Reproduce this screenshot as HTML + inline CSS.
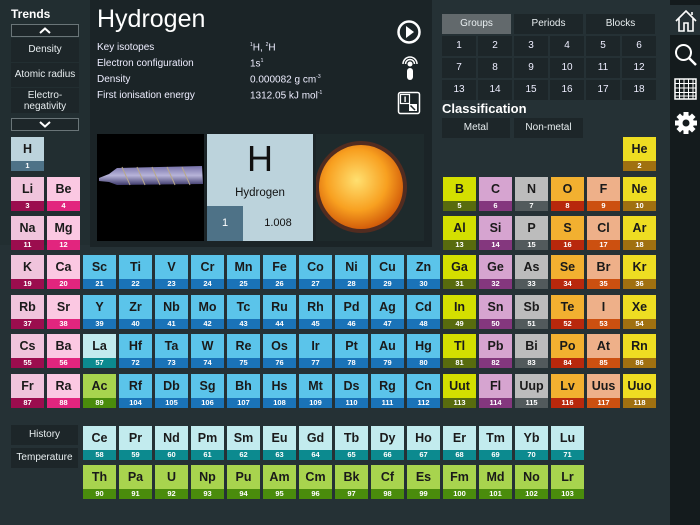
<!DOCTYPE html>
<html><head><meta charset="utf-8"><style>
*{margin:0;padding:0;box-sizing:border-box}
body{width:700px;height:525px;background:#253135;position:relative;overflow:hidden;font-family:"Liberation Sans",sans-serif;color:#fff}
.a{position:absolute}
.c{position:absolute;width:33px;height:34px}
.c b{display:block;height:24px;line-height:25px;text-align:center;font-size:12.5px;color:#1a1a1a;font-weight:bold}
.c i{display:block;height:10px;line-height:10px;text-align:center;font-size:7.5px;font-style:normal;font-weight:bold;color:#fff}
.h b{background:#bcd3dc}.h i{background:#4e7287}
.g1 b{background:#f0c4dc}.g1 i{background:#9b0d4e}
.g2 b{background:#fbc8e2}.g2 i{background:#e2257e}
.t b{background:#5bc4ea}.t i{background:#1a73b8}
.l b{background:#c2ebee}.l i{background:#0c8a8f}
.k b{background:#a8d44e}.k i{background:#4a8c0c}
.g13 b{background:#d4df00}.g13 i{background:#586b0e}
.g14 b{background:#d6a4d0}.g14 i{background:#84377e}
.g15 b{background:#bcbcbc}.g15 i{background:#525a5c}
.g16 b{background:#f2b030}.g16 i{background:#b8280c}
.g17 b{background:#eeb089}.g17 i{background:#cc5010}
.g18 b{background:#eedd22}.g18 i{background:#a07010}
.x1{left:11px}.x2{left:47px}.x3{left:83px}.x4{left:119px}.x5{left:155px}.x6{left:191px}.x7{left:227px}.x8{left:263px}.x9{left:299px}.x10{left:335px}.x11{left:371px}.x12{left:407px}.x13{left:443px}.x14{left:479px}.x15{left:515px}.x16{left:551px}.x17{left:587px}.x18{left:623px}
.y1{top:137px}.y2{top:177px}.y3{top:216px}.y4{top:255px}.y5{top:295px}.y6{top:334px}.y7{top:374px}.y8{top:426px}.y9{top:465px}
.btn{position:absolute;background:#1d2629;color:#e8eef0;font-size:10px;text-align:center}
.lab{position:absolute;font-size:10px;color:#eef}
.num{position:absolute;width:34px;height:20px;background:#1d2629;font-size:10px;line-height:20px;text-align:center;color:#eef}
</style></head><body>
<!-- left panel -->
<div class="a" style="left:0;top:0;width:90px;height:245px;background:#222e31"></div>
<div class="a" style="left:11px;top:7px;font-size:12px;font-weight:bold">Trends</div>
<div class="a" style="left:11px;top:24px;width:68px;height:13px;border:1px solid #6a7578;background:#1d2629"><svg width="66" height="11" style="display:block"><path d="M28 8 L33 3.5 L38 8" stroke="#fff" stroke-width="2" fill="none"/></svg></div>
<div class="btn" style="left:11px;top:38px;width:68px;height:24px;line-height:24px">Density</div>
<div class="btn" style="left:11px;top:63px;width:68px;height:24px;line-height:24px">Atomic radius</div>
<div class="btn" style="left:11px;top:88px;width:68px;height:25px;line-height:11px;padding-top:2px">Electro-<br>negativity</div>
<div class="a" style="left:11px;top:118px;width:68px;height:13px;border:1px solid #6a7578;background:#1d2629"><svg width="66" height="11" style="display:block"><path d="M28 3 L33 7.5 L38 3" stroke="#fff" stroke-width="2" fill="none"/></svg></div>
<!-- info panel -->
<div class="a" style="left:90px;top:0;width:342px;height:247px;background:#1b2427"></div>
<div class="a" style="left:97px;top:5px;font-size:25px">Hydrogen</div>
<div class="lab" style="left:97px;top:42px">Key isotopes</div>
<div class="lab" style="left:97px;top:58px">Electron configuration</div>
<div class="lab" style="left:97px;top:74px">Density</div>
<div class="lab" style="left:97px;top:90px">First ionisation energy</div>
<div class="lab" style="left:250px;top:42px"><sup style="font-size:5px">1</sup>H, <sup style="font-size:5px">2</sup>H</div>
<div class="lab" style="left:250px;top:58px">1s<sup style="font-size:5px">1</sup></div>
<div class="lab" style="left:250px;top:74px">0.000082 g cm<sup style="font-size:5px">-3</sup></div>
<div class="lab" style="left:250px;top:90px">1312.05 kJ mol<sup style="font-size:5px">-1</sup></div>
<svg class="a" style="left:396px;top:19px" width="26" height="26"><circle cx="13" cy="13" r="10.5" stroke="#fff" stroke-width="2.5" fill="none"/><path d="M10 7 L18 13 L10 19 Z" fill="#fff"/></svg>
<svg class="a" style="left:399px;top:55px" width="22" height="26"><path d="M4 9 A7 7 0 0 1 18 9" stroke="#fff" stroke-width="1.5" fill="none"/><path d="M6.5 9 A4.5 4.5 0 0 1 15.5 9" stroke="#fff" stroke-width="1.5" fill="none"/><circle cx="11" cy="9" r="2.5" fill="#fff"/><rect x="8" y="13" width="6" height="12" rx="3" fill="#fff"/></svg>
<svg class="a" style="left:397px;top:91px" width="25" height="25"><rect x="1.5" y="1.5" width="21" height="21" rx="2" stroke="#fff" stroke-width="1.5" fill="none"/><rect x="3.5" y="3.5" width="9" height="9" stroke="#fff" stroke-width="1.2" fill="none"/><rect x="7.4" y="5.5" width="1.4" height="5.5" fill="#fff"/><path d="M12 13 L20 13 L20 20 L12 20 Z" fill="#fff"/><path d="M13.5 14.5 L18 19" stroke="#1b2427" stroke-width="1.5"/></svg>
<div class="a" style="left:97px;top:134px;width:107px;height:107px;background:#000">
<svg width="107" height="107"><defs><linearGradient id="tb" x1="0" y1="0" x2="0" y2="1"><stop offset="0" stop-color="#8c86c8"/><stop offset=".5" stop-color="#d8d4ff"/><stop offset="1" stop-color="#4a4680"/></linearGradient></defs><path d="M2 44 L12 40 L20 34 L105 32 L106 50 L20 51 L12 48 L2 47Z" fill="url(#tb)" opacity=".85"/><path d="M25 33 L33 51 M40 33 L48 51 M55 33 L63 51 M70 33 L78 51 M85 33 L93 51" stroke="#b9a98a" stroke-width="1"/></svg></div>
<div class="a" style="left:207px;top:134px;width:106px;height:107px;background:#bcd3dc;color:#111">
<div class="a" style="left:0;top:4px;width:106px;text-align:center;font-size:36px">H</div>
<div class="a" style="left:0;top:53px;width:106px;text-align:center;font-size:11.5px">Hydrogen</div>
<div class="a" style="left:0;top:72px;width:36px;height:35px;background:#4e7287;color:#fff;text-align:center;line-height:35px;font-size:11px">1</div>
<div class="a" style="left:36px;top:72px;width:70px;height:35px;text-align:center;line-height:35px;font-size:11px">1.008</div></div>
<div class="a" style="left:316px;top:134px;width:108px;height:107px;background:#1e2a2c"><svg width="108" height="107"><defs><radialGradient id="sn" cx=".45" cy=".42" r=".6"><stop offset="0" stop-color="#ffe070"/><stop offset=".6" stop-color="#f8a020"/><stop offset="1" stop-color="#d05808"/></radialGradient></defs><circle cx="45" cy="53" r="46" fill="#a03010" opacity=".4"/><circle cx="45" cy="53" r="42" fill="url(#sn)"/></svg></div>
<!-- right panel -->
<div class="btn" style="left:442px;top:14px;width:69px;height:20px;line-height:20px;background:#62696c">Groups</div>
<div class="btn" style="left:514px;top:14px;width:69px;height:20px;line-height:20px">Periods</div>
<div class="btn" style="left:586px;top:14px;width:69px;height:20px;line-height:20px">Blocks</div>
<div class="num" style="left:442px;top:36px">1</div><div class="num" style="left:478px;top:36px">2</div><div class="num" style="left:514px;top:36px">3</div><div class="num" style="left:550px;top:36px">4</div><div class="num" style="left:586px;top:36px">5</div><div class="num" style="left:622px;top:36px">6</div>
<div class="num" style="left:442px;top:58px">7</div><div class="num" style="left:478px;top:58px">8</div><div class="num" style="left:514px;top:58px">9</div><div class="num" style="left:550px;top:58px">10</div><div class="num" style="left:586px;top:58px">11</div><div class="num" style="left:622px;top:58px">12</div>
<div class="num" style="left:442px;top:80px">13</div><div class="num" style="left:478px;top:80px">14</div><div class="num" style="left:514px;top:80px">15</div><div class="num" style="left:550px;top:80px">16</div><div class="num" style="left:586px;top:80px">17</div><div class="num" style="left:622px;top:80px">18</div>
<div class="a" style="left:442px;top:101px;font-size:13px;font-weight:bold">Classification</div>
<div class="btn" style="left:442px;top:118px;width:68px;height:20px;line-height:20px">Metal</div>
<div class="btn" style="left:514px;top:118px;width:69px;height:20px;line-height:20px">Non-metal</div>
<!-- sidebar -->
<div class="a" style="left:670px;top:0;width:30px;height:525px;background:#141b1d"></div>
<div class="a" style="left:670px;top:5px;width:30px;height:30px;background:#253135"></div>
<svg class="a" style="left:673px;top:8px" width="26" height="26"><path d="M3 13 L13 3 L23 13 M6 10 V23 H11 V15 H15 V23 H20 V10 M19 4 V7" stroke="#fff" stroke-width="1.6" fill="none"/></svg>
<svg class="a" style="left:673px;top:42px" width="26" height="26"><circle cx="10.5" cy="10.5" r="7.5" stroke="#fff" stroke-width="2" fill="none"/><path d="M16 16 L23 23" stroke="#fff" stroke-width="2.5"/></svg>
<svg class="a" style="left:674px;top:78px" width="24" height="22"><rect x="1" y="1" width="21" height="20" stroke="#fff" stroke-width="1.5" fill="none"/><path d="M5.5 1V21M10 1V21M14.5 1V21M19 1V21M1 5.5H22M1 10H22M1 14.5H22M1 18H22" stroke="#fff" stroke-width="1"/></svg>
<svg class="a" style="left:674px;top:111px" width="24" height="24"><g transform="translate(12 12)" fill="#fff"><circle r="8"/><g id="t"><rect x="-2.5" y="-11" width="5" height="5"/></g><use href="#t" transform="rotate(45)"/><use href="#t" transform="rotate(90)"/><use href="#t" transform="rotate(135)"/><use href="#t" transform="rotate(180)"/><use href="#t" transform="rotate(225)"/><use href="#t" transform="rotate(270)"/><use href="#t" transform="rotate(315)"/><circle r="3.5" fill="#141b1d"/></g></svg>
<!-- bottom buttons -->
<div class="btn" style="left:11px;top:425px;width:67px;height:20px;line-height:20px">History</div>
<div class="btn" style="left:11px;top:448px;width:67px;height:20px;line-height:20px">Temperature</div>
<!-- table -->
<div class="c h x1 y1"><b>H</b><i>1</i></div>
<div class="c g18 x18 y1"><b>He</b><i>2</i></div>
<div class="c g1 x1 y2"><b>Li</b><i>3</i></div><div class="c g2 x2 y2"><b>Be</b><i>4</i></div>
<div class="c g13 x13 y2"><b>B</b><i>5</i></div><div class="c g14 x14 y2"><b>C</b><i>6</i></div><div class="c g15 x15 y2"><b>N</b><i>7</i></div><div class="c g16 x16 y2"><b>O</b><i>8</i></div><div class="c g17 x17 y2"><b>F</b><i>9</i></div><div class="c g18 x18 y2"><b>Ne</b><i>10</i></div>
<div class="c g1 x1 y3"><b>Na</b><i>11</i></div><div class="c g2 x2 y3"><b>Mg</b><i>12</i></div>
<div class="c g13 x13 y3"><b>Al</b><i>13</i></div><div class="c g14 x14 y3"><b>Si</b><i>14</i></div><div class="c g15 x15 y3"><b>P</b><i>15</i></div><div class="c g16 x16 y3"><b>S</b><i>16</i></div><div class="c g17 x17 y3"><b>Cl</b><i>17</i></div><div class="c g18 x18 y3"><b>Ar</b><i>18</i></div>
<div class="c g1 x1 y4"><b>K</b><i>19</i></div><div class="c g2 x2 y4"><b>Ca</b><i>20</i></div><div class="c t x3 y4"><b>Sc</b><i>21</i></div><div class="c t x4 y4"><b>Ti</b><i>22</i></div><div class="c t x5 y4"><b>V</b><i>23</i></div><div class="c t x6 y4"><b>Cr</b><i>24</i></div><div class="c t x7 y4"><b>Mn</b><i>25</i></div><div class="c t x8 y4"><b>Fe</b><i>26</i></div><div class="c t x9 y4"><b>Co</b><i>27</i></div><div class="c t x10 y4"><b>Ni</b><i>28</i></div><div class="c t x11 y4"><b>Cu</b><i>29</i></div><div class="c t x12 y4"><b>Zn</b><i>30</i></div><div class="c g13 x13 y4"><b>Ga</b><i>31</i></div><div class="c g14 x14 y4"><b>Ge</b><i>32</i></div><div class="c g15 x15 y4"><b>As</b><i>33</i></div><div class="c g16 x16 y4"><b>Se</b><i>34</i></div><div class="c g17 x17 y4"><b>Br</b><i>35</i></div><div class="c g18 x18 y4"><b>Kr</b><i>36</i></div>
<div class="c g1 x1 y5"><b>Rb</b><i>37</i></div><div class="c g2 x2 y5"><b>Sr</b><i>38</i></div><div class="c t x3 y5"><b>Y</b><i>39</i></div><div class="c t x4 y5"><b>Zr</b><i>40</i></div><div class="c t x5 y5"><b>Nb</b><i>41</i></div><div class="c t x6 y5"><b>Mo</b><i>42</i></div><div class="c t x7 y5"><b>Tc</b><i>43</i></div><div class="c t x8 y5"><b>Ru</b><i>44</i></div><div class="c t x9 y5"><b>Rh</b><i>45</i></div><div class="c t x10 y5"><b>Pd</b><i>46</i></div><div class="c t x11 y5"><b>Ag</b><i>47</i></div><div class="c t x12 y5"><b>Cd</b><i>48</i></div><div class="c g13 x13 y5"><b>In</b><i>49</i></div><div class="c g14 x14 y5"><b>Sn</b><i>50</i></div><div class="c g15 x15 y5"><b>Sb</b><i>51</i></div><div class="c g16 x16 y5"><b>Te</b><i>52</i></div><div class="c g17 x17 y5"><b>I</b><i>53</i></div><div class="c g18 x18 y5"><b>Xe</b><i>54</i></div>
<div class="c g1 x1 y6"><b>Cs</b><i>55</i></div><div class="c g2 x2 y6"><b>Ba</b><i>56</i></div><div class="c l x3 y6"><b>La</b><i>57</i></div><div class="c t x4 y6"><b>Hf</b><i>72</i></div><div class="c t x5 y6"><b>Ta</b><i>73</i></div><div class="c t x6 y6"><b>W</b><i>74</i></div><div class="c t x7 y6"><b>Re</b><i>75</i></div><div class="c t x8 y6"><b>Os</b><i>76</i></div><div class="c t x9 y6"><b>Ir</b><i>77</i></div><div class="c t x10 y6"><b>Pt</b><i>78</i></div><div class="c t x11 y6"><b>Au</b><i>79</i></div><div class="c t x12 y6"><b>Hg</b><i>80</i></div><div class="c g13 x13 y6"><b>Tl</b><i>81</i></div><div class="c g14 x14 y6"><b>Pb</b><i>82</i></div><div class="c g15 x15 y6"><b>Bi</b><i>83</i></div><div class="c g16 x16 y6"><b>Po</b><i>84</i></div><div class="c g17 x17 y6"><b>At</b><i>85</i></div><div class="c g18 x18 y6"><b>Rn</b><i>86</i></div>
<div class="c g1 x1 y7"><b>Fr</b><i>87</i></div><div class="c g2 x2 y7"><b>Ra</b><i>88</i></div><div class="c k x3 y7"><b>Ac</b><i>89</i></div><div class="c t x4 y7"><b>Rf</b><i>104</i></div><div class="c t x5 y7"><b>Db</b><i>105</i></div><div class="c t x6 y7"><b>Sg</b><i>106</i></div><div class="c t x7 y7"><b>Bh</b><i>107</i></div><div class="c t x8 y7"><b>Hs</b><i>108</i></div><div class="c t x9 y7"><b>Mt</b><i>109</i></div><div class="c t x10 y7"><b>Ds</b><i>110</i></div><div class="c t x11 y7"><b>Rg</b><i>111</i></div><div class="c t x12 y7"><b>Cn</b><i>112</i></div><div class="c g13 x13 y7"><b>Uut</b><i>113</i></div><div class="c g14 x14 y7"><b>Fl</b><i>114</i></div><div class="c g15 x15 y7"><b>Uup</b><i>115</i></div><div class="c g16 x16 y7"><b>Lv</b><i>116</i></div><div class="c g17 x17 y7"><b>Uus</b><i>117</i></div><div class="c g18 x18 y7"><b>Uuo</b><i>118</i></div>
<div class="c l x3 y8"><b>Ce</b><i>58</i></div><div class="c l x4 y8"><b>Pr</b><i>59</i></div><div class="c l x5 y8"><b>Nd</b><i>60</i></div><div class="c l x6 y8"><b>Pm</b><i>61</i></div><div class="c l x7 y8"><b>Sm</b><i>62</i></div><div class="c l x8 y8"><b>Eu</b><i>63</i></div><div class="c l x9 y8"><b>Gd</b><i>64</i></div><div class="c l x10 y8"><b>Tb</b><i>65</i></div><div class="c l x11 y8"><b>Dy</b><i>66</i></div><div class="c l x12 y8"><b>Ho</b><i>67</i></div><div class="c l x13 y8"><b>Er</b><i>68</i></div><div class="c l x14 y8"><b>Tm</b><i>69</i></div><div class="c l x15 y8"><b>Yb</b><i>70</i></div><div class="c l x16 y8"><b>Lu</b><i>71</i></div>
<div class="c k x3 y9"><b>Th</b><i>90</i></div><div class="c k x4 y9"><b>Pa</b><i>91</i></div><div class="c k x5 y9"><b>U</b><i>92</i></div><div class="c k x6 y9"><b>Np</b><i>93</i></div><div class="c k x7 y9"><b>Pu</b><i>94</i></div><div class="c k x8 y9"><b>Am</b><i>95</i></div><div class="c k x9 y9"><b>Cm</b><i>96</i></div><div class="c k x10 y9"><b>Bk</b><i>97</i></div><div class="c k x11 y9"><b>Cf</b><i>98</i></div><div class="c k x12 y9"><b>Es</b><i>99</i></div><div class="c k x13 y9"><b>Fm</b><i>100</i></div><div class="c k x14 y9"><b>Md</b><i>101</i></div><div class="c k x15 y9"><b>No</b><i>102</i></div><div class="c k x16 y9"><b>Lr</b><i>103</i></div>
</body></html>
